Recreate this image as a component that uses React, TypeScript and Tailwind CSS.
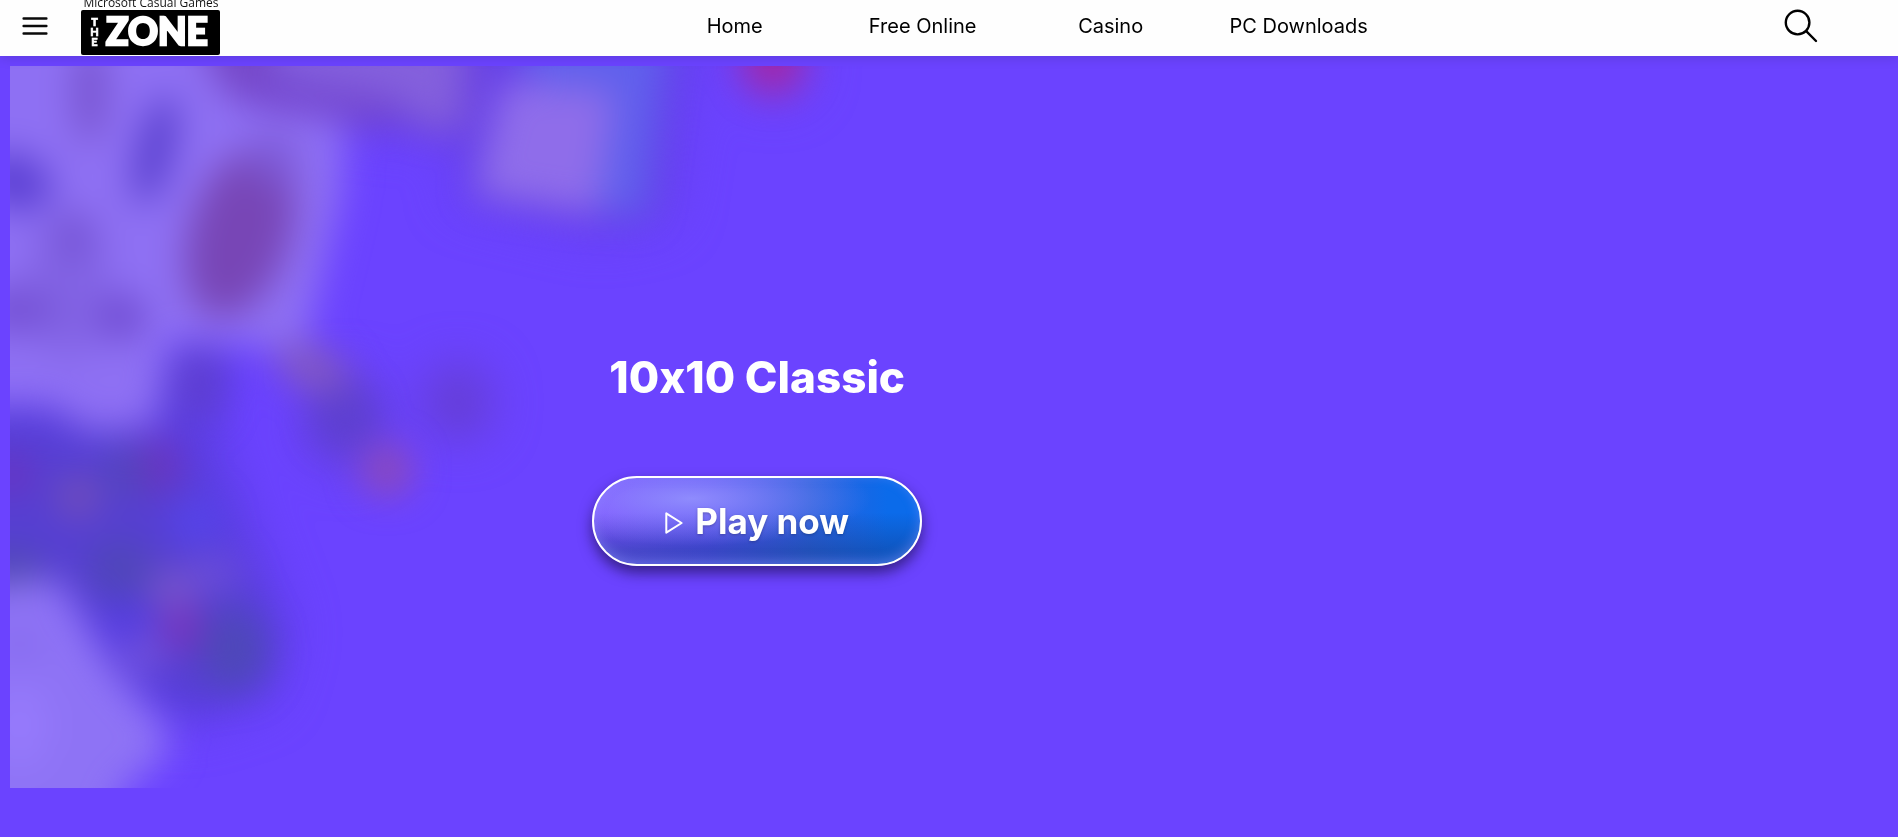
const navLinks = ['Home', 'Free Online', 'Casino', 'PC Downloads'];

const MenuIcon = () => (
  <svg viewBox="0 0 26 20" className="h-5 w-[26px]" stroke="#0a0a0a" strokeWidth="2.4" strokeLinecap="round">
    <path d="M1.6 2.5H24.4M1.6 10H24.4M1.6 17.5H24.4" />
  </svg>
);

const SearchIcon = () => (
  <svg viewBox="0 0 34 34" className="h-[34px] w-[34px]" fill="none" stroke="#000" strokeWidth="2.4" strokeLinecap="round">
    <circle cx="13.6" cy="13.6" r="11.8" />
    <path d="M22.2 22.2L32 32" />
  </svg>
);

const Logo = () => (
  <a href="#" aria-label="Microsoft Casual Games The Zone" className="block">
    <svg viewBox="0 0 140 56" className="h-14 w-[140px]">
      <text x="70" y="7" textAnchor="middle" fontSize="12" fill="#111" fontFamily='"Open Sans", sans-serif'>
        Microsoft Casual Games
      </text>
      <rect x="0" y="10" width="139" height="45" rx="2" fill="#000" />
      <g fill="#fff" stroke="#fff" fontFamily='Lato, "Open Sans", sans-serif' fontWeight="900">
        <g fontSize="11" textAnchor="middle" strokeWidth="0.6">
          <text x="13.5" y="26">T</text>
          <text x="13.5" y="36">H</text>
          <text x="13.5" y="46">E</text>
        </g>
        <text x="25" y="45" fontSize="37" strokeWidth="2.4">ZONE</text>
      </g>
    </svg>
  </a>
);

const Header = () => (
  <header className="relative z-10 flex h-14 items-center bg-[#fefefe] shadow-[0_1px_12px_rgba(0,0,0,0.15)]">
    <div className="flex w-1/3 items-center gap-8 pl-[22px]">
      <button type="button" aria-label="Menu" className="flex w-[27px] items-center pb-1">
        <MenuIcon />
      </button>
      <Logo />
    </div>
    <nav className="flex px-2 pb-1">
      {navLinks.map((label) => (
        <a key={label} href="#" className="w-[188px] text-center text-xl text-black">
          {label}
        </a>
      ))}
    </nav>
    <button type="button" aria-label="Search" className="mr-20 mb-1 ml-auto">
      <SearchIcon />
    </button>
  </header>
);

// Tumbling cards and chips, heavily blurred behind the game title
const HeroArt = () => (
  <svg viewBox="10 66 900 722" className="col-start-1 row-start-1 ml-[10px] h-[722px] w-[900px]" aria-hidden="true">
    <defs>
      <filter id="soft" filterUnits="userSpaceOnUse" x="-100" y="-60" width="1200" height="1000" colorInterpolationFilters="sRGB">
        <feGaussianBlur stdDeviation="18" />
      </filter>
      <filter id="softer" filterUnits="userSpaceOnUse" x="-100" y="-60" width="1200" height="1000" colorInterpolationFilters="sRGB">
        <feGaussianBlur stdDeviation="24" />
      </filter>
    </defs>

    <g filter="url(#softer)">
      <path d="M470 20L700 20L670 220L600 235L455 200Z" fill="#6540ea" />
      <path d="M180 0L490 0L475 140L380 130L250 110Z" fill="#6a42de" />
      <path d="M-60 400L170 340L230 340L215 430L290 630L270 700L190 725L-60 690Z" fill="#5a3ee0" />
      <ellipse cx="345" cy="420" rx="42" ry="48" fill="#6240d8" />
      <ellipse cx="458" cy="402" rx="32" ry="38" fill="#643dd0" />
      <circle cx="773" cy="64" r="36" fill="#783ee4" />
    </g>

    <g filter="url(#soft)">
      {/* Cards */}
      <path d="M-60 0L190 0L250 108L345 122L342 190L304 350L170 340L155 425L90 432L50 405L-60 405Z" fill="#8e70f3" />
      <path d="M180 0L270 0L270 85L400 105L385 120L275 112L225 95Z" fill="#7648c8" />
      <path d="M265 0L467 0L462 130L425 126L390 98L275 78Z" fill="#8460dc" />
      <path d="M500 0L672 0L644 218L590 208Z" fill="#6060ec" />
      <path d="M503 80L614 92L598 214L474 194Z" fill="#8f6dea" />

      {/* Faces on the cards */}
      <ellipse cx="240" cy="232" rx="50" ry="88" transform="rotate(18 240 232)" fill="#7846b6" />
      <ellipse cx="272" cy="160" rx="26" ry="24" fill="#7c58d4" />
      <ellipse cx="155" cy="150" rx="18" ry="56" transform="rotate(14 155 150)" fill="#593fce" />
      <ellipse cx="90" cy="92" rx="16" ry="52" fill="#7652cc" />
      <ellipse cx="15" cy="182" rx="38" ry="28" transform="rotate(20 15 182)" fill="#5c40d4" />
      <ellipse cx="75" cy="237" rx="20" ry="26" fill="#6c4aca" />
      <ellipse cx="20" cy="310" rx="42" ry="24" fill="#7450d4" />
      <ellipse cx="120" cy="317" rx="26" ry="24" fill="#704cd2" />
      <ellipse cx="68" cy="285" rx="40" ry="74" fill="#7c5cdc" opacity="0.6" />
      <ellipse cx="200" cy="385" rx="22" ry="38" fill="#5e3ed0" />

      {/* Loose chips */}
      <circle cx="773" cy="62" r="29" fill="#a426a6" />
      <ellipse cx="312" cy="368" rx="38" ry="20" transform="rotate(22 312 368)" fill="#845abc" />
      <ellipse cx="345" cy="415" rx="26" ry="28" fill="#5c3fce" />
      <circle cx="387" cy="470" r="25" fill="#8f4ab4" />

      {/* Chip stack */}
      <path d="M-40 425L80 435L180 455L205 520L250 600L270 665L195 700L145 670L80 590L-40 570Z" fill="#563fd2" />
      <ellipse cx="12" cy="475" rx="20" ry="20" fill="#6c32c0" />
      <ellipse cx="160" cy="465" rx="20" ry="28" fill="#6c34bc" />
      <ellipse cx="125" cy="470" rx="20" ry="30" fill="#5446bc" />
      <circle cx="78" cy="497" r="18" fill="#7c54b0" />
      <ellipse cx="195" cy="522" rx="24" ry="24" fill="#5544ec" />
      <ellipse cx="120" cy="570" rx="34" ry="32" fill="#5046ba" />
      <ellipse cx="10" cy="570" rx="36" ry="20" fill="#504ab0" />
      <ellipse cx="130" cy="618" rx="20" ry="20" fill="#543ce4" />
      <ellipse cx="172" cy="590" rx="24" ry="20" fill="#7a56cc" />
      <ellipse cx="215" cy="573" rx="26" ry="16" fill="#6e50da" />
      <ellipse cx="235" cy="650" rx="34" ry="42" fill="#4e48b8" />
      <ellipse cx="182" cy="628" rx="17" ry="22" fill="#8030b8" />
      <ellipse cx="145" cy="652" rx="18" ry="18" fill="#7858dc" />

      {/* Card in the lower corner */}
      <path d="M-60 590L57 578L114 670L168 732L168 754L122 790L105 850L-60 850Z" fill="#8e73f5" />
      <ellipse cx="20" cy="725" rx="28" ry="44" fill="#967afc" />
      <ellipse cx="20" cy="645" rx="18" ry="18" fill="#866aee" />
    </g>
  </svg>
);

const PlayIcon = () => (
  <svg viewBox="0 0 18 22" className="mt-1 h-[22px] w-[18px]" fill="none" stroke="#fff" strokeWidth="2" strokeLinejoin="round">
    <path d="M1.3 1.3V20.7L16.6 11Z" />
  </svg>
);

const Hero = () => (
  <section className="grid py-[10px]">
    <HeroArt />
    <div className="z-[1] col-start-1 row-start-1 flex w-4/5 flex-col items-center pt-[287px] pr-1">
      <h1 className="text-[44px] leading-[48px] font-extrabold text-white [font-feature-settings:'calt'_0]">10x10 Classic</h1>
      <button
        type="button"
        className="mt-[75px] flex h-[90px] w-[330px] items-center justify-center gap-3 rounded-full border-2 border-white bg-[radial-gradient(ellipse_55%_55%_at_30%_24%,rgba(155,155,255,0.8),transparent),linear-gradient(to_bottom,transparent_40%,rgba(20,60,140,0.45)_85%),linear-gradient(to_right,#7d50ff,#5a4cf4_35%,#2c60dc_66%,#0b6bea_90%)] text-[35px] font-bold text-white shadow-[0_7px_14px_rgba(20,10,60,0.6),inset_0_-3px_12px_rgba(140,150,255,0.45)] [text-shadow:0_1px_3px_rgba(0,0,0,0.25)]"
      >
        <PlayIcon />
        Play now
      </button>
    </div>
  </section>
);

export default function App() {
  return (
    <div className="min-h-screen overflow-hidden bg-[#6b43ff] font-[Inter,'Open_Sans',sans-serif]">
      <Header />
      <Hero />
    </div>
  );
}
